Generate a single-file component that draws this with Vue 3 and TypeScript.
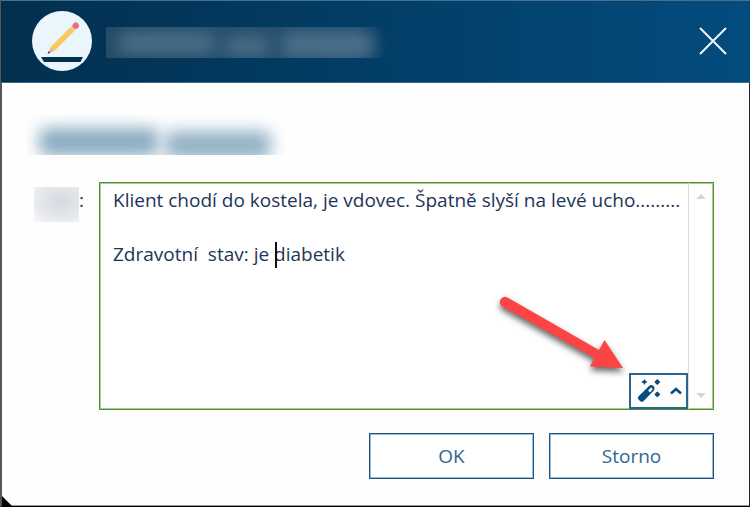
<script setup lang="ts">
import { ref } from 'vue'

const note = ref(
  'Klient chodí do kostela, je vdovec. Špatně slyší na levé ucho.........\n\nZdravotní  stav: je diabetik'
)
</script>

<template>
  <div class="dialog" role="dialog">
    <header class="header">
      <svg class="badge" viewBox="0 0 60 60" aria-hidden="true">
        <circle cx="30" cy="30" r="30" fill="#eaf5fc" />
        <path d="M9 46H51L48.500 51H12Z" fill="#02304f" />
        <g transform="translate(15.500 43) rotate(-45)">
          <path d="M0 0L8 -2.700V2.700Z" fill="#dfb5a5" />
          <path d="M0 0L3 -1.200V1.200Z" fill="#4b4a5c" />
          <rect x="7" y="-2.700" width="28" height="5.400" fill="#fdc75b" />
          <rect x="35" y="-2.700" width="3" height="5.400" fill="#e5c9c4" />
          <circle cx="40" cy="0" r="3.200" fill="#ee707a" />
        </g>
      </svg>
      <div class="mask mask-title" aria-hidden="true">
        <span class="smear s1"></span><span class="smear s2"></span><span class="smear s3"></span>
      </div>
      <button class="close" type="button" aria-label="Zavřít">
        <svg viewBox="0 0 30 30"><path d="M2 2L28 28M28 2L2 28" /></svg>
      </button>
    </header>

    <main class="body">
      <div class="mask mask-name" aria-hidden="true">
        <span class="smear n1"></span><span class="smear n2"></span>
      </div>

      <div class="field">
        <label class="label" for="note"><span class="mask-label"></span>:</label>
        <div class="editor">
          <textarea id="note" v-model="note" class="text" spellcheck="false"></textarea>
          <div class="scroll" aria-hidden="true">
            <span class="tri up"></span>
            <span class="tri down"></span>
          </div>
          <span class="caret"></span>
          <button class="magic" type="button" aria-label="Nástroje textu">
            <svg class="wand" viewBox="0 0 26 26">
              <path
                fill-rule="evenodd"
                d="M1.500 19L13 7.500Q15.500 5.500 17.800 7.700Q20 10 18.200 12.500L7 24Q5 25.500 3.500 24L1.500 22Q0 20.500 1.500 19ZM12 12.500L14 14.500L16.700 11.500Q17 9.500 15.200 9.300Z"
              />
              <path d="M8 0L9.200 2L11.500 3.200L9.200 4.400L8 6.400L6.800 4.400L4.500 3.200L6.800 2Z" />
              <path d="M22 0L23.700 1.500L25.200 3.200L23.700 4.900L22 6.400L20.300 4.900L18.800 3.200L20.300 1.500Z" />
              <path d="M22 13.500L23.700 15L25.200 16.700L23.700 18.400L22 19.900L20.300 18.400L18.800 16.700L20.300 15Z" />
            </svg>
            <svg class="chevron" viewBox="0 0 12 8"><path d="M1 6.500L6 2L11 6.500" /></svg>
          </button>
          <svg class="arrow" viewBox="0 0 130 84" aria-hidden="true">
            <path
              d="M11.500 4.500L103 57L108.500 47L127 75L94 73.500L98.500 65L6.500 13.500A5 5 0 0 1 11.500 4.500Z"
            />
          </svg>
        </div>
      </div>

      <div class="actions">
        <button class="btn" type="button">OK</button>
        <button class="btn" type="button">Storno</button>
      </div>
    </main>
  </div>
</template>

<style>
body {
  margin: 0;
  background: #fff;
}
</style>

<style scoped>
.dialog {
  position: relative;
  box-sizing: border-box;
  min-height: 100vh;
  display: flex;
  flex-direction: column;
  background: #fefefe;
  border-left: 2px solid #555657;
  border-right: 1px solid #222;
  border-bottom: 1px solid #000;
  box-shadow: inset 0 -1px #999;
  font-family: 'Open Sans', 'Noto Sans', sans-serif;
  color: #1d3557;
}

.dialog::after {
  content: '';
  position: absolute;
  left: 0;
  bottom: 0;
  border-left: 10px solid #000;
  border-top: 10px solid transparent;
}

.header {
  box-sizing: border-box;
  height: 83px;
  margin: 0 -1px;
  padding: 0 20px 2px 31px;
  display: flex;
  align-items: center;
  border-top: 1px solid #47708e;
  border-bottom: 1px solid #39698b;
  background: linear-gradient(90deg, #022f4e, #034c7e);
}

.badge {
  width: 60px;
  height: 60px;
  flex: none;
}

.mask {
  position: relative;
  overflow: hidden;
}

.mask-title {
  width: 284px;
  height: 31px;
  margin: 4px auto 0 14px;
  background: linear-gradient(90deg, #234b67, #255070 88%, transparent 98%);
}

.smear {
  position: absolute;
  border-radius: 8px;
  filter: blur(8px);
}

.s1 {
  left: 12px;
  top: 6px;
  width: 98px;
  height: 20px;
  background: #4e7188;
}

.s2 {
  left: 118px;
  top: 10px;
  width: 46px;
  height: 18px;
  background: #4c7189;
}

.s3 {
  left: 176px;
  top: 6px;
  width: 92px;
  height: 24px;
  background: #4c718b;
}

.close {
  width: 34px;
  height: 34px;
  padding: 2px;
  border: 0;
  background: none;
}

.close svg {
  display: block;
  width: 30px;
  height: 30px;
  fill: none;
  stroke: #f0f5f9;
  stroke-width: 2;
}

.body {
  flex: 1;
  padding: 32px 35px 27px 32px;
}

.mask-name {
  width: 260px;
  height: 40px;
  margin-left: -7px;
}

.n1 {
  left: 12px;
  top: 13px;
  width: 120px;
  height: 28px;
  background: #8aabc2;
}

.n2 {
  left: 138px;
  top: 16px;
  width: 106px;
  height: 28px;
  background: #93b1c6;
}

.field {
  display: flex;
  margin-top: 27px;
}

.label {
  width: 65px;
  flex: none;
  display: flex;
  padding-top: 5px;
  font-size: 19px;
  line-height: 27px;
}

.mask-label {
  width: 45px;
  height: 35px;
  background: radial-gradient(ellipse at 60% 40%, #d6dae0, #e4e7eb 55%, #f6f7f8);
}

.editor {
  position: relative;
  flex: 1;
  display: flex;
  box-sizing: border-box;
  height: 228px;
  border: 1px solid #4f9429;
  box-shadow: inset 0 0 0 1px #a9cd96;
  background: #fff;
}

.text {
  flex: 1;
  min-width: 0;
  box-sizing: border-box;
  padding: 4px 0 0 13px;
  border: 0;
  outline: 0;
  resize: none;
  overflow: hidden;
  background: none;
  color: #1d3557;
  font-family: inherit;
  font-size: 19px;
  line-height: 27px;
}

.scroll {
  width: 25px;
  flex: none;
  display: flex;
  flex-direction: column;
  justify-content: space-between;
  align-items: center;
  padding: 11px 0;
  box-sizing: border-box;
  border-left: 1px solid #dcdcdc;
}

.tri {
  border-left: 5px solid transparent;
  border-right: 5px solid transparent;
}

.up {
  border-bottom: 5px solid #d3d3d3;
}

.down {
  border-top: 5px solid #d3d3d3;
}

.caret {
  position: absolute;
  left: 175px;
  top: 59px;
  width: 2px;
  height: 26px;
  background: #111;
}

.magic {
  position: absolute;
  right: 25px;
  bottom: 0;
  box-sizing: border-box;
  width: 59px;
  height: 36px;
  padding: 0 4px 0 6px;
  display: flex;
  align-items: center;
  justify-content: space-between;
  border: 2px solid #2a6490;
  background: #fff;
}

.wand {
  width: 24px;
  height: 24px;
  overflow: visible;
  fill: #064c7e;
}

.chevron {
  width: 12px;
  height: 8px;
  fill: none;
  stroke: #064c7e;
  stroke-width: 2.5;
}

.arrow {
  position: absolute;
  right: 87px;
  bottom: 32px;
  width: 130px;
  height: 84px;
  overflow: visible;
  pointer-events: none;
  fill: #fd4444;
  filter: drop-shadow(0 4px 3px rgba(0, 0, 0, 0.6));
}

.actions {
  display: flex;
  justify-content: flex-end;
  gap: 15px;
  margin-top: 23px;
}

.btn {
  box-sizing: border-box;
  width: 165px;
  height: 46px;
  padding: 0;
  border: 1px solid #1a5786;
  box-shadow: inset 0 0 0 1px #9dbbd0;
  background: #fff;
  color: #2d6895;
  font-family: inherit;
  font-size: 19px;
}
</style>
